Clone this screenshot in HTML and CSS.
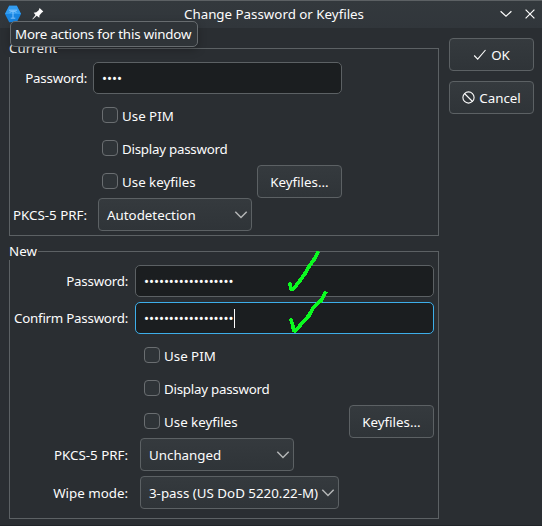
FILE: index.html
```html
<!DOCTYPE html>
<html lang="en">
<head>
<meta charset="utf-8">
<title>Change Password or Keyfiles</title>
<link rel="stylesheet" href="styles.css">
</head>
<body>
<div class="window">
  <header class="titlebar">
    <svg class="app-icon" width="16" height="18" viewBox="0 0 16 18"><path d="M4.2 .8h7.6L16 9l-4.2 8.2H4.2L0 9z" fill="#1785e2"/><path d="M4.2 .8h7.6L16 9H0z" fill="#329cf0"/><path d="M4 5.2h8M4.7 7.4c1.8-1.5 4.8-1.5 6.6 0M8 7v6M5.7 13.2h4.6" fill="none" stroke="#8dcbff" stroke-width=".9"/></svg>
    <svg class="pin" width="12" height="12" viewBox="0 0 12 12"><path d="M7.6 0 11.3 3.5 9.7 4.8 7.5 7.3 7.3 9.7 4.7 7.7 .7 11.4 .4 11.1 3.5 6.9 1.7 4.8 4.3 4.3 6.7 2.2z" fill="#fcfcfc"/></svg>
    <h1 class="title">Change Password or Keyfiles</h1>
    <svg class="minimize" width="12" height="12" viewBox="0 0 12 12"><path d="m.6 3.2 5.4 5 5.4-5" fill="none" stroke="#fcfcfc" stroke-width="1.2"/></svg>
    <svg class="close" width="10" height="10" viewBox="0 0 10 10"><path d="m.6.6 8.8 8.8m0-8.8L.6 9.4" fill="none" stroke="#fcfcfc" stroke-width="1.2"/></svg>
    <div class="tooltip">More actions for this window</div>
  </header>
  <main class="body">
    <div class="groups">
      <section class="group current">
        <h2 class="legend">Current</h2>
        <label class="label tight">Password:</label>
        <div class="field">••••</div>
        <div class="row check"><span class="box"></span>Use PIM</div>
        <div class="row check tight"><span class="box"></span>Display password</div>
        <div class="row check"><span class="box"></span>Use keyfiles<button class="button keyfiles">Keyfiles...</button></div>
        <label class="label">PKCS-5 PRF:</label>
        <div class="combo">Autodetection<svg width="14" height="10" viewBox="0 0 14 10"><path d="m1.3 1.8 5.7 5.7 5.7-5.7" fill="none" stroke="#b4b6b7" stroke-width="1.5"/></svg></div>
      </section>
      <section class="group new">
        <h2 class="legend">New</h2>
        <label class="label tight">Password:</label>
        <div class="field">••••••••••••••••••</div>
        <label class="label tight confirm-row">Confirm Password:</label>
        <div class="field focused confirm-row">••••••••••••••••••<span class="caret"></span></div>
        <div class="row check"><span class="box"></span>Use PIM</div>
        <div class="row check tight"><span class="box"></span>Display password</div>
        <div class="row check"><span class="box"></span>Use keyfiles<button class="button keyfiles">Keyfiles...</button></div>
        <label class="label">PKCS-5 PRF:</label>
        <div class="combo">Unchanged<svg width="14" height="10" viewBox="0 0 14 10"><path d="m1.3 1.8 5.7 5.7 5.7-5.7" fill="none" stroke="#b4b6b7" stroke-width="1.5"/></svg></div>
        <label class="label wipe-row">Wipe mode:</label>
        <div class="combo wide wipe-row">3-pass (US DoD 5220.22-M)<svg width="14" height="10" viewBox="0 0 14 10"><path d="m1.3 1.8 5.7 5.7 5.7-5.7" fill="none" stroke="#b4b6b7" stroke-width="1.5"/></svg></div>
        <svg class="marks" width="50" height="90" viewBox="280 248 50 90"><path d="M289.500 282.500 291.300 290 295 287 300 280.500 305 273.500 309 266.500 314 259.500 318.500 251.500M290.300 318.500 292.500 324 294 331.500 297 329 303 322 309 315.500 313 308 321 300.500 326 291.500" fill="none" stroke="#0bfa20" stroke-width="3.700" stroke-linejoin="bevel" stroke-linecap="butt" shape-rendering="crispEdges"/></svg>
      </section>
    </div>
    <aside class="actions">
      <button class="button ok"><svg width="14" height="12" viewBox="0 0 14 12"><path d="m1.200 6.500 3.500 3.700L12.500 1" fill="none" stroke="#fcfcfc" stroke-width="1.100"/></svg>OK</button>
      <button class="button cancel"><svg width="13" height="13" viewBox="0 0 13 13"><path d="m2.500 2.500 8 8" stroke="#fcfcfc" stroke-width="1.100"/><circle cx="6.500" cy="6.500" r="5.600" fill="none" stroke="#fcfcfc" stroke-width="1.100"/></svg>Cancel</button>
    </aside>
  </main>
</div>
</body>
</html>
```
FILE: styles.css
```css
* { box-sizing: border-box; }
body {
  margin: 0;
  background: #2a2e32;
  color: #fcfcfc;
  font: 13.333px/18px "Noto Sans", sans-serif;
}
h1, h2 { margin: 0; font: inherit; }
svg { display: block; flex: none; }
.window { height: 526px; overflow: hidden; border-bottom: 1px solid #202428; }
.titlebar {
  position: relative;
  display: flex;
  align-items: center;
  height: 28px;
  padding: 0 7px 0 5px;
  border-top: 1px solid #5c6164;
  background: linear-gradient(#33393d, #31363b);
}
.app-icon { margin-top: -2px; }
.pin { margin: -2px 0 0 11px; }
.title { margin: -2px 0 0 140px; }
.minimize { margin: -1px 0 0 auto; }
.close { margin: -1px 0 0 13px; }
.tooltip {
  position: absolute;
  z-index: 2;
  left: 10px;
  top: 20px;
  width: 188px;
  height: 26px;
  padding: 3px 4px;
  border: 1px solid #676c6f;
  border-radius: 5px;
  background: #2f3438;
  white-space: nowrap;
  letter-spacing: -.18px;
  box-shadow: 0 3px 8px rgba(0, 0, 0, .25);
}
.body { display: flex; gap: 10px; padding: 10px 8px 0 9px; }
.groups { width: 430px; padding-top: 10px; }
.group {
  position: relative;
  display: grid;
  align-items: center;
  justify-content: start;
  border: 1px solid #5c6164;
}
.current {
  height: 188px;
  padding-top: 13px;
  grid-template: 37px repeat(4, 33px) / 77px 255px;
}
.new {
  height: 268px;
  margin-top: 15px;
  padding-top: 13px;
  grid-template: 37px 37px repeat(4, 33px) 38px / 119px 305px;
}
.legend {
  position: absolute;
  left: -1px;
  top: -10px;
  padding-right: 1px;
  background: #2a2e32;
}
.label { text-align: right; white-space: nowrap; padding-top: 1px; }
.new .label { padding-right: 1px; }
.tight { letter-spacing: -.24px; }
.label:nth-of-type(1), .confirm-row.label { align-self: start; margin-top: 6px; }
.field {
  display: flex;
  align-items: center;
  align-self: start;
  height: 32px;
  margin-left: 6px;
  padding-left: 8px;
  border: 1px solid #5c6164;
  border-radius: 5px;
  background: #1b1e20;
  letter-spacing: -.04px;
}
.focused { border-color: #3daee9; }
.caret { width: 1px; height: 19px; background: #fcfcfc; }
.row { grid-column: 1 / -1; }
.check { display: flex; align-items: center; height: 33px; padding: 0 0 0 92px; }
.new .check { padding-left: 134px; }
.box {
  width: 16px;
  height: 16px;
  margin: -1px 4px 0 0;
  border: 1px solid #6a6e71;
  border-radius: 4px;
  background: #2f3438;
}
.button, .combo {
  height: 33px;
  border: 1px solid #5c6164;
  border-radius: 4px;
  background: linear-gradient(#353a3e, #2f3438);
  color: inherit;
  font: inherit;
}
.button {
  display: flex;
  align-items: center;
  justify-content: center;
  gap: 4px;
  width: 85px;
  padding: 1px 0 0;
}
.ok svg { margin-top: -1px; }
.cancel svg { margin-top: -2px; }
.keyfiles { margin: 0 0 0 auto; }
.combo {
  display: flex;
  align-items: center;
  justify-content: space-between;
  width: 154px;
  margin-left: 11px;
  padding: 1px 3px 0 8px;
  white-space: nowrap;
}
.wide { width: 199px; }
.wipe-row { align-self: end; }
.label.wipe-row { margin-bottom: 7px; }
.marks { position: absolute; z-index: 1; left: 270px; top: -4px; }
.actions { display: flex; flex-direction: column; gap: 10px; }
```
